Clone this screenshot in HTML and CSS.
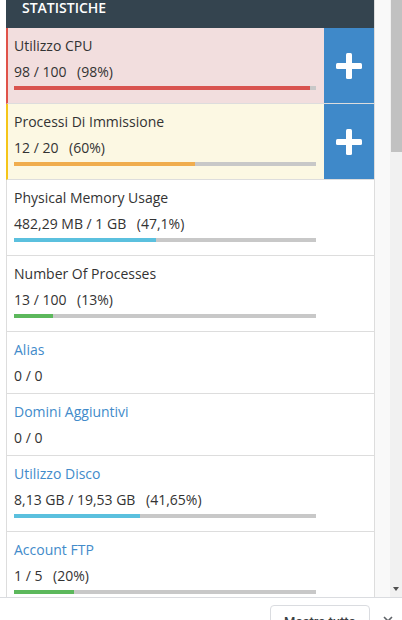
FILE: index.html
```html
<!DOCTYPE html>
<html lang="it">
<head>
<meta charset="utf-8">
<title>Statistiche</title>
<link rel="stylesheet" href="styles.css">
</head>
<body>
<div class="viewport">
  <div class="page">
    <div class="content">
      <section class="panel">
        <div class="panel-heading">Statistiche</div>

        <div class="stat stat-danger">
          <div class="stat-body">
            <div class="stat-title">Utilizzo CPU</div>
            <div class="stat-value">98 / 100 <span class="pct">(98%)</span></div>
            <div class="bar"><div class="fill fill-red" style="width:98%"></div></div>
          </div>
          <a class="stat-action" href="#"><svg width="26" height="26" viewBox="0 0 26 26"><rect x="0" y="10" width="26" height="6" rx="1.5" fill="#fff"/><rect x="10" y="0" width="6" height="26" rx="1.5" fill="#fff"/></svg></a>
        </div>

        <div class="stat stat-warning">
          <div class="stat-body">
            <div class="stat-title">Processi Di Immissione</div>
            <div class="stat-value">12 / 20 <span class="pct">(60%)</span></div>
            <div class="bar"><div class="fill fill-orange" style="width:60%"></div></div>
          </div>
          <a class="stat-action" href="#"><svg width="26" height="26" viewBox="0 0 26 26"><rect x="0" y="10" width="26" height="6" rx="1.5" fill="#fff"/><rect x="10" y="0" width="6" height="26" rx="1.5" fill="#fff"/></svg></a>
        </div>

        <div class="stat">
          <div class="stat-body">
            <div class="stat-title">Physical Memory Usage</div>
            <div class="stat-value">482,29 MB / 1 GB <span class="pct">(47,1%)</span></div>
            <div class="bar"><div class="fill fill-blue" style="width:47.1%"></div></div>
          </div>
        </div>

        <div class="stat">
          <div class="stat-body">
            <div class="stat-title">Number Of Processes</div>
            <div class="stat-value">13 / 100 <span class="pct">(13%)</span></div>
            <div class="bar"><div class="fill fill-green" style="width:13%"></div></div>
          </div>
        </div>

        <div class="stat">
          <div class="stat-body">
            <div class="stat-title link">Alias</div>
            <div class="stat-value">0 / 0</div>
          </div>
        </div>

        <div class="stat">
          <div class="stat-body">
            <div class="stat-title link">Domini Aggiuntivi</div>
            <div class="stat-value">0 / 0</div>
          </div>
        </div>

        <div class="stat">
          <div class="stat-body">
            <div class="stat-title link">Utilizzo Disco</div>
            <div class="stat-value">8,13 GB / 19,53 GB <span class="pct">(41,65%)</span></div>
            <div class="bar"><div class="fill fill-blue" style="width:41.65%"></div></div>
          </div>
        </div>

        <div class="stat">
          <div class="stat-body">
            <div class="stat-title link">Account FTP</div>
            <div class="stat-value">1 / 5 <span class="pct">(20%)</span></div>
            <div class="bar"><div class="fill fill-green" style="width:20%"></div></div>
          </div>
        </div>
      </section>
      <div class="gutter"></div>
    </div>
    <div class="scrollbar">
      <div class="thumb"></div>
      <div class="scroll-arrow"><span class="tri"></span></div>
    </div>
  </div>
  <div class="dlbar">
    <button class="show-all" type="button">Mostra tutto</button>
    <span class="close"><svg width="10" height="10" viewBox="0 0 10 10"><path d="M1 1 L9 9 M9 1 L1 9" stroke="#5f6368" stroke-width="1.6" fill="none"/></svg></span>
  </div>
</div>
</body>
</html>
```

FILE: styles.css
```css
html, body {
  margin: 0;
  padding: 0;
}
body {
  font-family: "Open Sans", "DejaVu Sans", sans-serif;
  font-size: 14px;
  line-height: 20px;
  color: #333;
  background: #fff;
}
.viewport {
  height: 620px;
  display: flex;
  flex-direction: column;
  overflow: hidden;
}
.page {
  height: 597px;
  flex: none;
  display: flex;
  overflow: hidden;
}
.content {
  flex: 1;
  display: flex;
  align-items: flex-start;
  overflow: hidden;
  background: #fff;
}
.panel {
  flex: none;
  width: 369px;
  box-sizing: border-box;
  margin-left: 6px;
  border-right: 1px solid #ddd;
  background: #fff;
}
.gutter {
  flex: 1;
  align-self: stretch;
  background: #f9f9f9;
}
.panel-heading {
  height: 28px;
  box-sizing: border-box;
  padding-left: 16px;
  background: #34444f;
  color: #fff;
  font-weight: 600;
  font-size: 14px;
  line-height: 15px;
  text-transform: uppercase;
}
.stat {
  display: grid;
  grid-template-columns: 1fr 50px;
  border-left: 1px solid #ddd;
  border-bottom: 1px solid #ddd;
}
.stat-body {
  grid-column: 1;
  padding: 8px 8px 7px 7px;
}
.stat-danger {
  background: #f2dede;
  border-left: 2px solid #e0534a;
}
.stat-danger .stat-body,
.stat-warning .stat-body {
  padding-left: 6px;
}
.stat-warning {
  background: #fcf8e3;
  border-left: 2px solid #f5c518;
}
.stat-title {
  color: #333;
}
.stat-title.link {
  color: #428bca;
}
.stat-value {
  margin-top: 6px;
  color: #333;
}
.pct {
  margin-left: 7px;
}
.bar {
  height: 4px;
  margin: 4px 0 6px;
  background: #c8c8c8;
  display: flex;
}
.fill {
  height: 4px;
}
.fill-red { background: #d9534f; }
.fill-orange { background: #f0ad4e; }
.fill-blue { background: #5bc0de; }
.fill-green { background: #5cb85c; }
.stat-action {
  grid-column: 2;
  background: #3f89c9;
  display: flex;
  align-items: center;
  justify-content: center;
  text-decoration: none;
}
.scrollbar {
  width: 12px;
  flex: none;
  background: #f1f1f1;
  display: flex;
  flex-direction: column;
}
.thumb {
  height: 152px;
  margin-left: 1px;
  background: #c1c1c1;
}
.scroll-arrow {
  margin-top: auto;
  height: 17px;
  display: flex;
  align-items: center;
  justify-content: center;
}
.tri {
  width: 0;
  height: 0;
  border-left: 3.5px solid transparent;
  border-right: 3.5px solid transparent;
  border-top: 4px solid #505050;
}
.dlbar {
  flex: none;
  height: 23px;
  box-sizing: border-box;
  border-top: 1px solid #dadce0;
  background: #fff;
  display: flex;
  justify-content: flex-end;
  align-items: flex-start;
  gap: 13px;
  padding: 7px 9px 0 0;
}
.show-all {
  width: 100px;
  height: 32px;
  flex: none;
  box-sizing: border-box;
  border: 1px solid #dadce0;
  border-radius: 4px;
  background: #fff;
  color: #3c4043;
  font-family: Roboto, "Liberation Sans", sans-serif;
  font-size: 13px;
  font-weight: 500;
  padding: 0;
}
.close {
  display: flex;
  margin-top: 11px;
}
```
